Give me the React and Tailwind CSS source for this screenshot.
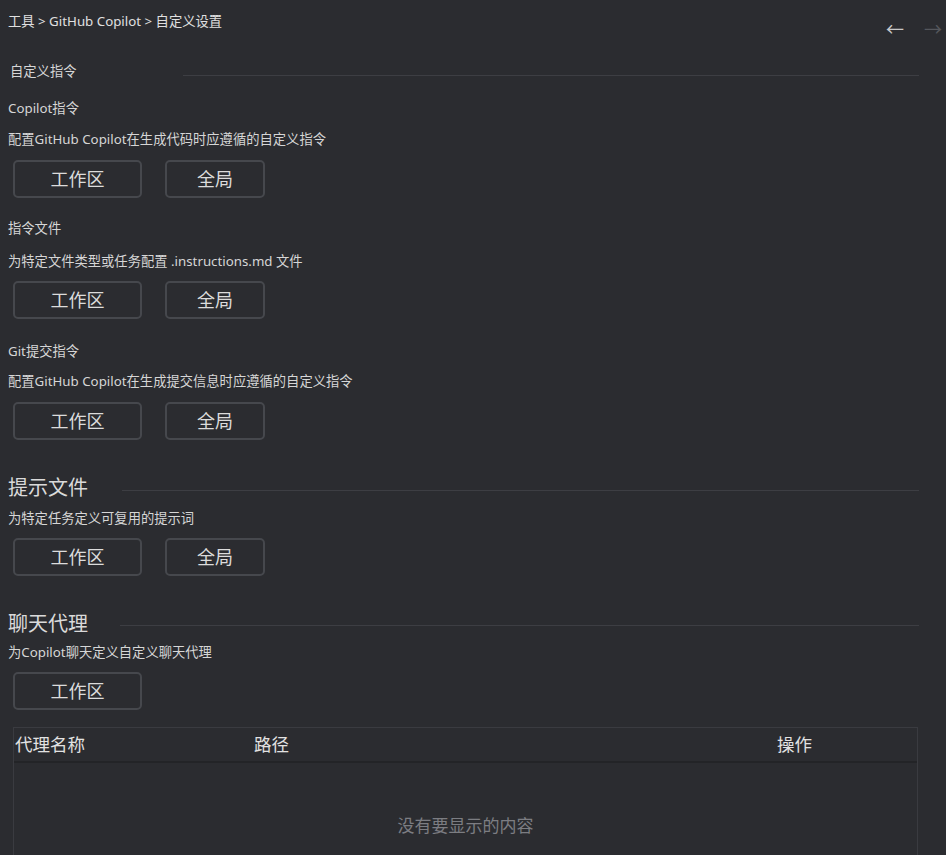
import React from "react";

const font = { fontFamily: '"Noto Sans", "Noto Sans CJK SC", sans-serif' };

function Btn({ children, w = "w-[129px]" }) {
  return (
    <button
      className={`${w} h-[38px] rounded-[5px] border-2 border-[#46484d] bg-[#2b2c30] text-[18px] leading-none text-[#dcdcdc] flex items-center justify-center`}
    >
      {children}
    </button>
  );
}

function BtnRow({ global = true, mt }) {
  return (
    <div className={`flex gap-[23px] pl-[5px] ${mt}`}>
      <Btn>工作区</Btn>
      {global && <Btn w="w-[100px]">全局</Btn>}
    </div>
  );
}

export default function App() {
  return (
    <div
      lang="zh-CN"
      className="w-[946px] h-[855px] overflow-hidden bg-[#2b2c30] text-[#d6d6d6] pl-[8px]"
      style={font}
    >
      {/* header */}
      <div className="flex justify-between h-[62px]">
        <div className="pt-[12px] text-[13.3px] leading-[18px] text-[#e0e0e0]">
          工具 &gt; GitHub Copilot &gt; 自定义设置
        </div>
        <div className="flex gap-[20px] mt-[20px] mr-[4px] text-[18px] leading-[18px]">
          <span className="text-[#c8c8c8]">←</span>
          <span className="text-[#55575c]">→</span>
        </div>
      </div>

      {/* 自定义指令 */}
      <div className="flex items-start pr-[27px]">
        <div className="pl-[2px] text-[13.3px] leading-[18px] w-[175px]">自定义指令</div>
        <div className="flex-1 h-px bg-[#3d3e43] mt-[13px]" />
      </div>
      <div className="mt-[19px] text-[13.3px] leading-[18px]">Copilot指令</div>
      <div className="mt-[13px] text-[13.3px] leading-[18px]">
        配置GitHub Copilot在生成代码时应遵循的自定义指令
      </div>
      <BtnRow mt="mt-[12px]" />

      <div className="mt-[21px] text-[13.3px] leading-[18px]">指令文件</div>
      <div className="mt-[15px] text-[13.3px] leading-[18px]">
        为特定文件类型或任务配置 .instructions.md 文件
      </div>
      <BtnRow mt="mt-[11px]" />

      <div className="mt-[23px] text-[13.3px] leading-[18px]">Git提交指令</div>
      <div className="mt-[12px] text-[13.3px] leading-[18px]">
        配置GitHub Copilot在生成提交信息时应遵循的自定义指令
      </div>
      <BtnRow mt="mt-[12px]" />

      {/* 提示文件 */}
      <div className="mt-[34px] flex items-start pr-[27px]">
        <div className="text-[20px] leading-[28px] w-[114px] text-[#dadada]">提示文件</div>
        <div className="flex-1 h-px bg-[#3d3e43] mt-[16px]" />
      </div>
      <div className="mt-[7px] text-[13.3px] leading-[18px]">为特定任务定义可复用的提示词</div>
      <BtnRow mt="mt-[11px]" />

      {/* 聊天代理 */}
      <div className="mt-[34px] flex items-start pr-[27px]">
        <div className="text-[20px] leading-[28px] w-[112px] text-[#dadada]">聊天代理</div>
        <div className="flex-1 h-px bg-[#3d3e43] mt-[15px]" />
      </div>
      <div className="mt-[5px] text-[13.3px] leading-[18px]">为Copilot聊天定义自定义聊天代理</div>
      <BtnRow global={false} mt="mt-[11px]" />

      {/* table */}
      <div className="mt-[17px] ml-[5px] w-[905px] h-[200px] border border-[#3a3b40]">
        <div className="flex h-[35px] items-center border-b-2 border-[#232427] text-[17.5px] text-[#e2e2e2]">
          <div className="w-[240px] pl-[1px]">代理名称</div>
          <div className="flex-1">路径</div>
          <div className="w-[140px]">操作</div>
        </div>
        <div className="pt-[51px] text-center text-[17px] leading-[24px] text-[#7c7d82]">
          没有要显示的内容
        </div>
      </div>
    </div>
  );
}
